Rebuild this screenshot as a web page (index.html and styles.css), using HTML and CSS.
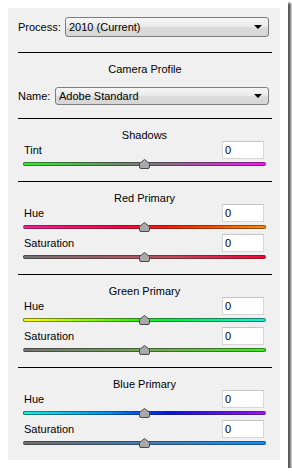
FILE: index.html
```html
<!DOCTYPE html>
<html lang="en">
<head>
    <meta charset="UTF-8">
    <title>Camera Calibration</title>
    <link rel="stylesheet" href="styles.css">
</head>
<body>
    <div class="frame">
        <div class="panel">
            <div class="process-row">
                <span class="label">Process:</span>
                <div class="select process-select">2010 (Current)<span class="arrow"></span></div>
            </div>
            <div class="rule rule-top"></div>

            <div class="title">Camera Profile</div>
            <div class="name-row">
                <span class="label">Name:</span>
                <div class="select name-select">Adobe Standard<span class="arrow"></span></div>
            </div>
            <div class="rule rule-name"></div>

            <div class="group">
                <div class="title">Shadows</div>
                <div class="field"><span>Tint</span><input type="text" value="0"></div>
                <div class="track tint"><svg class="thumb" width="11" height="10" viewBox="0 0 11 10"><path d="M0.5 4.5 L5.5 0.5 L10.5 4.5 L10.5 8 Q10.5 9.5 9 9.5 L2 9.5 Q0.5 9.5 0.5 8 Z" fill="#a9a9a9" stroke="#4a4a4a"/></svg></div>
            </div>
            <div class="rule"></div>

            <div class="group">
                <div class="title">Red Primary</div>
                <div class="field"><span>Hue</span><input type="text" value="0"></div>
                <div class="track red-hue"><svg class="thumb" width="11" height="10" viewBox="0 0 11 10"><path d="M0.5 4.5 L5.5 0.5 L10.5 4.5 L10.5 8 Q10.5 9.5 9 9.5 L2 9.5 Q0.5 9.5 0.5 8 Z" fill="#a9a9a9" stroke="#4a4a4a"/></svg></div>
                <div class="field second"><span>Saturation</span><input type="text" value="0"></div>
                <div class="track red-sat"><svg class="thumb" width="11" height="10" viewBox="0 0 11 10"><path d="M0.5 4.5 L5.5 0.5 L10.5 4.5 L10.5 8 Q10.5 9.5 9 9.5 L2 9.5 Q0.5 9.5 0.5 8 Z" fill="#a9a9a9" stroke="#4a4a4a"/></svg></div>
            </div>
            <div class="rule"></div>

            <div class="group">
                <div class="title">Green Primary</div>
                <div class="field"><span>Hue</span><input type="text" value="0"></div>
                <div class="track green-hue"><svg class="thumb" width="11" height="10" viewBox="0 0 11 10"><path d="M0.5 4.5 L5.5 0.5 L10.5 4.5 L10.5 8 Q10.5 9.5 9 9.5 L2 9.5 Q0.5 9.5 0.5 8 Z" fill="#a9a9a9" stroke="#4a4a4a"/></svg></div>
                <div class="field second"><span>Saturation</span><input type="text" value="0"></div>
                <div class="track green-sat"><svg class="thumb" width="11" height="10" viewBox="0 0 11 10"><path d="M0.5 4.5 L5.5 0.5 L10.5 4.5 L10.5 8 Q10.5 9.5 9 9.5 L2 9.5 Q0.5 9.5 0.5 8 Z" fill="#a9a9a9" stroke="#4a4a4a"/></svg></div>
            </div>
            <div class="rule"></div>

            <div class="group">
                <div class="title">Blue Primary</div>
                <div class="field"><span>Hue</span><input type="text" value="0"></div>
                <div class="track blue-hue"><svg class="thumb" width="11" height="10" viewBox="0 0 11 10"><path d="M0.5 4.5 L5.5 0.5 L10.5 4.5 L10.5 8 Q10.5 9.5 9 9.5 L2 9.5 Q0.5 9.5 0.5 8 Z" fill="#a9a9a9" stroke="#4a4a4a"/></svg></div>
                <div class="field second"><span>Saturation</span><input type="text" value="0"></div>
                <div class="track blue-sat"><svg class="thumb" width="11" height="10" viewBox="0 0 11 10"><path d="M0.5 4.5 L5.5 0.5 L10.5 4.5 L10.5 8 Q10.5 9.5 9 9.5 L2 9.5 Q0.5 9.5 0.5 8 Z" fill="#a9a9a9" stroke="#4a4a4a"/></svg></div>
            </div>
        </div>
    </div>
</body>
</html>
```

FILE: styles.css
```css
body {
    margin: 0;
    background: #fff;
    font-family: 'Liberation Sans', Arial, sans-serif;
    font-size: 11px;
    color: #000;
}
.frame {
    width: 288px;
    height: 468px;
    box-sizing: border-box;
    padding: 8px;
    background: #fff;
    box-shadow: 3px 3px 2px rgba(0, 0, 0, 0.65);
}
.panel {
    height: 452px;
    box-sizing: border-box;
    background: #f0f0f0;
    padding: 9px 8px 0 10px;
}
.process-row, .name-row {
    display: flex;
    align-items: center;
}
.process-row .label { width: 47px; }
.name-row { margin-top: 12px; }
.name-row .label { width: 37px; }
.select {
    position: relative;
    box-sizing: border-box;
    border: 1px solid #7d7d7d;
    border-radius: 3px;
    background: linear-gradient(#f6f6f6, #e9e9e9 50%, #dcdcdc 51%, #d6d6d6);
    padding-left: 3px;
    display: flex;
    align-items: center;
    font-size: 11px;
}
.process-select { width: 204px; height: 20px; }
.name-select { width: 214px; height: 18px; }
.arrow {
    position: absolute;
    right: 6px;
    top: 50%;
    margin-top: -2px;
    border-left: 4px solid transparent;
    border-right: 4px solid transparent;
    border-top: 4px solid #000;
}
.rule {
    height: 1px;
    background: #000;
    margin-top: 15px;
}
.rule-top { margin-top: 15px; }
.rule-name { margin-top: 13px; }
.title {
    text-align: center;
    line-height: 12px;
    margin-top: 10px;
}
.group {
    padding: 0 6px 0 5px;
}
.field {
    display: flex;
    justify-content: space-between;
    align-items: center;
    height: 18px;
    padding: 0 2px 0 1px;
}
.field.second { margin-top: 5px; }
.field input {
    width: 42px;
    height: 18px;
    box-sizing: border-box;
    border: 1px solid #d6d6d6;
    border-top-color: #c4c4c4;
    background: #fff;
    padding: 0 2px;
    font-family: 'Liberation Sans', Arial, sans-serif;
    font-size: 11px;
    color: #000;
    outline: none;
}
.track {
    position: relative;
    height: 4px;
    margin-top: 3px;
    box-sizing: border-box;
    border: 1px solid rgba(40, 40, 40, 0.55);
    border-radius: 2px;
}
.thumb {
    position: absolute;
    left: 50%;
    top: -4px;
    margin-left: -6px;
}
.tint { background: linear-gradient(to right, #2ef02e, #6a8a6a 40%, #8a6a8a 60%, #ff10ff); }
.red-hue { background: linear-gradient(to right, #ff1a9a, #ff0040 40%, #ff1a00 60%, #ff8a00); }
.red-sat { background: linear-gradient(to right, #747474, #c24a5a 60%, #ff0030); }
.green-hue { background: linear-gradient(to right, #ffff00, #3cf000 45%, #00f040 60%, #10f0d8); }
.green-sat { background: linear-gradient(to right, #747474, #6ab04a 60%, #38f010); }
.blue-hue { background: linear-gradient(to right, #10f0e0, #0090ff 35%, #0010f0 60%, #a010ff); }
.blue-sat { background: linear-gradient(to right, #6e6e6e, #3a80c0 60%, #0a90ff); }
```
